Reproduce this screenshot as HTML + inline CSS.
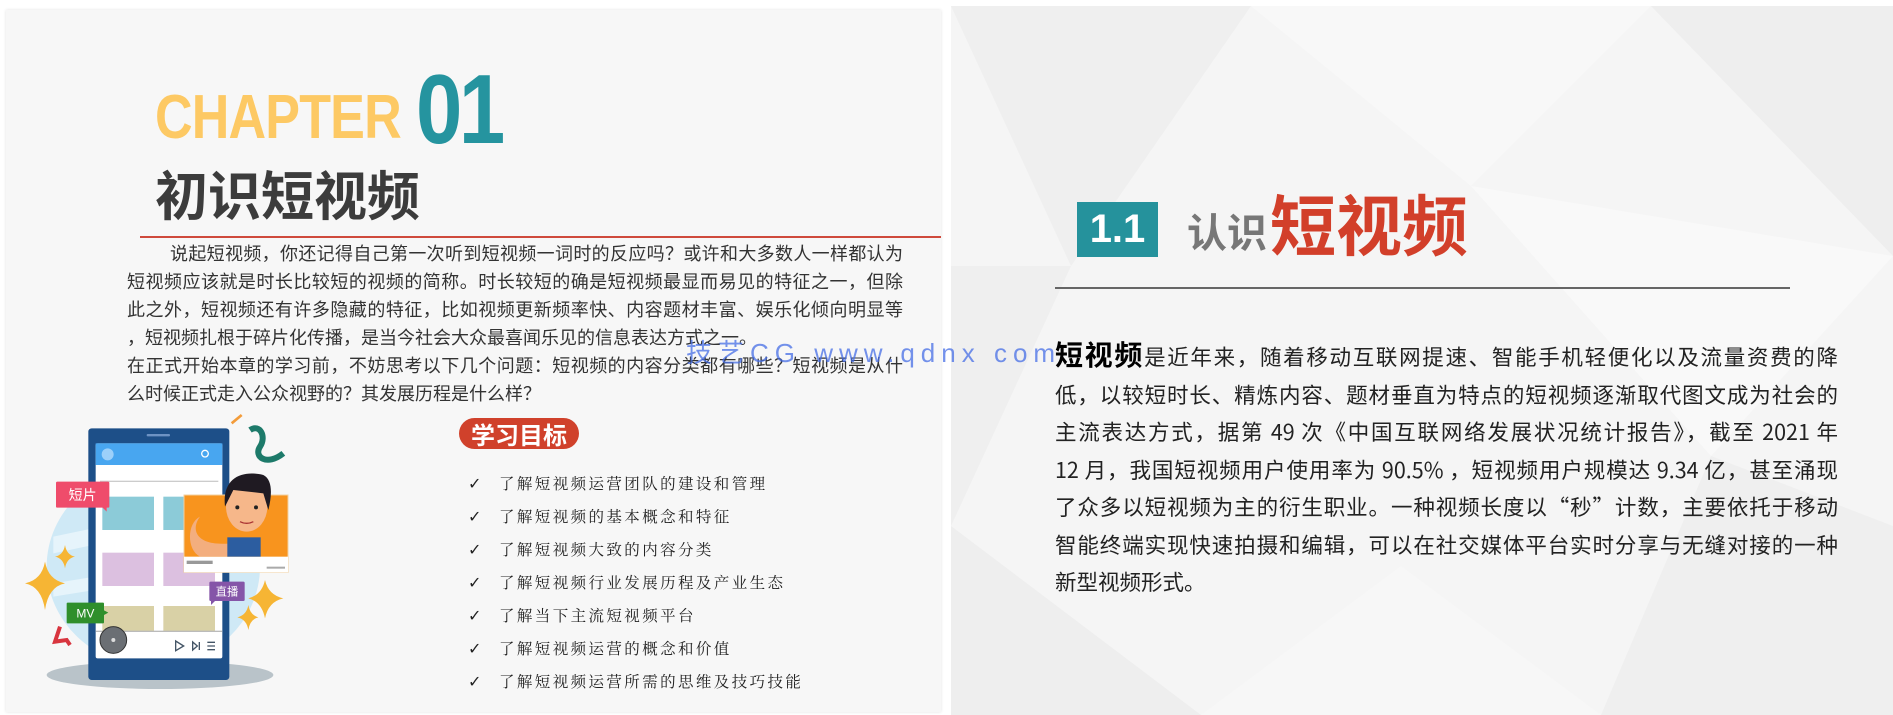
<!DOCTYPE html>
<html><head><meta charset="utf-8">
<style>
*{margin:0;padding:0;box-sizing:border-box}
body{width:1893px;height:715px;background:#fff;position:relative;overflow:hidden;font-family:"Liberation Sans","Noto Sans CJK SC",sans-serif}
.lp{position:absolute;left:6px;top:10px;width:935px;height:702px;background:#f7f7f7;box-shadow:0 0 3px rgba(0,0,0,.12)}
.rp{position:absolute;left:951px;top:6px;width:942px;height:709px;background:#f5f5f5;overflow:hidden}
.abs{position:absolute;white-space:nowrap}
.chap{left:155px;top:78px;font-size:62px;font-weight:bold;color:#fdc964;line-height:80px;letter-spacing:-1px;transform:scaleX(.84);transform-origin:left}
.n01{left:416px;top:54px;font-size:98px;font-weight:bold;color:#25949f;line-height:110px;letter-spacing:-4px;transform:scaleX(.85);transform-origin:left}
.tt{left:155px;top:158px;font-size:53px;font-weight:bold;color:#3c3c3c;line-height:70px;font-family:"Noto Sans CJK SC",sans-serif}
.rl{position:absolute;left:140px;top:236px;width:801px;height:2px;background:#cf4a3c}
.body{position:absolute;left:127px;top:239px;width:776px;font-size:18px;line-height:28px;color:#333;font-family:"Noto Sans CJK SC",sans-serif}
.body div{text-align:justify;text-align-last:justify;white-space:nowrap}
.body div.nl{text-align-last:left}
.pill{position:absolute;left:459px;top:418px;width:120px;height:31px;border-radius:16px;background:#d0412b;color:#fff;font-weight:bold;font-size:24px;line-height:31px;text-align:center;font-family:"Noto Sans CJK SC",sans-serif}
.obj{position:absolute;left:468px;top:467px;font-size:15.5px;color:#222;font-family:"Noto Serif CJK SC",serif;line-height:33px;letter-spacing:2.4px}
.obj span{display:inline-block;width:31px;font-family:"DejaVu Sans";font-size:16px}
.wm{left:686px;top:333px;font-size:26px;color:rgba(70,110,230,.75);letter-spacing:6px;font-family:"Liberation Sans","Noto Sans CJK SC",sans-serif}
.box{position:absolute;left:1077px;top:202px;width:81px;height:55px;background:#25929c;color:#fff;font-weight:bold;font-size:40px;line-height:55px;text-align:center}
.rz{left:1187px;top:200px;font-size:40px;font-weight:bold;color:#777;font-family:"Noto Sans CJK SC",sans-serif;line-height:60px}
.rt{left:1270px;top:180px;font-size:66px;font-weight:bold;color:#d23f2a;font-family:"Noto Sans CJK SC",sans-serif;line-height:84px}
.gl{position:absolute;left:1055px;top:287px;width:735px;height:2px;background:#666}
.rb{position:absolute;left:1055px;top:336px;width:783px;font-size:21.5px;line-height:37.5px;color:#222;font-family:"Noto Sans CJK SC",sans-serif}
.rb div{text-align:justify;text-align-last:justify;white-space:nowrap}
.rb div.nl{text-align-last:left}
.rb b{font-size:28px;color:#000}
</style></head><body>
<div class="lp"></div>
<div class="rp">
<svg width="942" height="709" style="position:absolute;left:0;top:0">
<polygon points="0,0 300,0 120,260" fill="#efefef"/>
<polygon points="300,0 700,0 520,180" fill="#f8f8f8"/>
<polygon points="700,0 942,0 942,250" fill="#eeeeee"/>
<polygon points="0,260 120,260 0,520" fill="#efefef"/>
<polygon points="520,180 942,250 760,450" fill="#f9f9f9"/>
<polygon points="0,520 250,709 0,709" fill="#eeeeee"/>
<polygon points="760,450 942,520 942,709 650,709" fill="#efefef"/>
<polygon points="250,709 450,560 650,709" fill="#f7f7f7"/>
</svg>
</div>
<div class="abs chap">CHAPTER</div>
<div class="abs n01">01</div>
<div class="abs tt">初识短视频</div>
<div class="rl"></div>
<div class="body">
<div style="padding-left:43px">说起短视频，你还记得自己第一次听到短视频一词时的反应吗？或许和大多数人一样都认为</div>
<div>短视频应该就是时长比较短的视频的简称。时长较短的确是短视频最显而易见的特征之一，但除</div>
<div>此之外，短视频还有许多隐藏的特征，比如视频更新频率快、内容题材丰富、娱乐化倾向明显等</div>
<div class="nl">，短视频扎根于碎片化传播，是当今社会大众最喜闻乐见的信息表达方式之一。</div>
<div>在正式开始本章的学习前，不妨思考以下几个问题：短视频的内容分类都有哪些？短视频是从什</div>
<div class="nl">么时候正式走入公众视野的？其发展历程是什么样？</div>
</div>
<div class="pill">学习目标</div>
<div class="obj">
<div><span>✓</span>了解短视频运营团队的建设和管理</div>
<div><span>✓</span>了解短视频的基本概念和特征</div>
<div><span>✓</span>了解短视频大致的内容分类</div>
<div><span>✓</span>了解短视频行业发展历程及产业生态</div>
<div><span>✓</span>了解当下主流短视频平台</div>
<div><span>✓</span>了解短视频运营的概念和价值</div>
<div><span>✓</span>了解短视频运营所需的思维及技巧技能</div>
</div>
<svg style="position:absolute;left:0;top:410px" width="320" height="300" viewBox="0 0 960 900">
<ellipse cx="480" cy="795" rx="340" ry="42" fill="#b9c3c9"/>
<ellipse cx="460" cy="470" rx="320" ry="300" fill="#cfe9f6"/>
<path d="M160 380 L780 250 L780 300 L160 430Z" fill="#e6f4fb"/>
<path d="M160 520 L780 420 L780 460 L160 560Z" fill="#e6f4fb"/>
<rect x="265" y="55" width="423" height="755" rx="10" fill="#1d4f88"/>
<rect x="440" y="72" width="70" height="7" rx="3" fill="#6d93c4"/>
<rect x="287" y="100" width="380" height="645" rx="6" fill="#fff"/>
<rect x="287" y="100" width="380" height="65" fill="#48a6f0"/>
<circle cx="323" cy="133" r="18" fill="#9cd0fa"/>
<circle cx="615" cy="131" r="10" stroke="#fff" stroke-width="4" fill="none"/>
<rect x="300" y="212" width="355" height="4" fill="#ccc"/>
<rect x="307" y="260" width="155" height="100" fill="#8ccbd8"/>
<rect x="490" y="260" width="155" height="100" fill="#8ccbd8"/>
<rect x="307" y="428" width="155" height="100" fill="#dcc0e0"/>
<rect x="490" y="428" width="155" height="100" fill="#dcc0e0"/>
<rect x="307" y="588" width="155" height="75" fill="#d9d1a6"/>
<rect x="490" y="588" width="155" height="75" fill="#d9d1a6"/>
<rect x="287" y="662" width="380" height="4" fill="#bbb"/>
<circle cx="340" cy="690" r="40" fill="#6b6f74" stroke="#333" stroke-width="3"/>
<circle cx="340" cy="690" r="6" fill="#ddd"/>
<path d="M527 693 L527 722 L551 708Z" fill="none" stroke="#456" stroke-width="4"/>
<path d="M578 696 L578 720 L592 708Z M598 696 V720" fill="none" stroke="#456" stroke-width="4"/>
<path d="M622 697 H645 M622 708 H645 M622 719 H645" stroke="#456" stroke-width="4"/>
<rect x="552" y="255" width="312" height="232" fill="#f8941e" stroke="#f2d0a0" stroke-width="3"/>
<rect x="552" y="440" width="312" height="47" fill="#fff"/>
<rect x="560" y="452" width="78" height="10" fill="#999"/>
<rect x="800" y="470" width="55" height="6" fill="#aaa"/>
<path d="M600 320 C570 360 590 410 690 400 L690 440 L600 440 C560 420 560 340 600 320Z" fill="#f3ae7e"/>
<rect x="682" y="382" width="100" height="58" fill="#2c5da0"/>
<ellipse cx="740" cy="290" rx="62" ry="75" fill="#f6b78a"/>
<path d="M675 290 C665 200 730 180 790 195 C820 210 815 260 805 300 L790 250 L700 240 Z" fill="#1f1a22"/>
<circle cx="712" cy="292" r="6" fill="#222"/><circle cx="768" cy="292" r="6" fill="#222"/>
<path d="M720 335 Q740 345 760 335" stroke="#a33" stroke-width="4" fill="none"/>
<path d="M750 60 C780 40 800 80 780 110 C760 140 800 170 850 130" stroke="#1d7a6a" stroke-width="18" fill="none"/>
<path d="M695 40 L725 15" stroke="#f39c3a" stroke-width="8"/>
<rect x="168" y="215" width="160" height="78" rx="4" fill="#ef4c6b"/>
<path d="M305 290 L320 305 L320 290Z" fill="#ef4c6b"/>
<text x="248" y="270" font-size="42" fill="#fff" text-anchor="middle" font-family="Noto Sans CJK SC">短片</text>
<rect x="628" y="515" width="106" height="58" rx="4" fill="#8555a8"/>
<path d="M633 573 L633 585 L645 573Z" fill="#8555a8"/>
<text x="681" y="556" font-size="34" fill="#fff" text-anchor="middle" font-family="Noto Sans CJK SC">直播</text>
<rect x="200" y="578" width="112" height="62" rx="3" fill="#2f8f2c"/>
<path d="M310 600 L325 608 L310 616Z" fill="#2f8f2c"/>
<text x="256" y="622" font-size="36" fill="#fff" text-anchor="middle" font-family="Liberation Sans">MV</text>
<path d="M135 455 Q145 510 195 520 Q145 530 135 600 Q125 530 75 520 Q125 510 135 455Z" fill="#f6b534"/>
<path d="M195 405 Q200 435 225 440 Q200 445 195 475 Q190 445 165 440 Q190 435 195 405Z" fill="#f6b534"/>
<path d="M795 510 Q805 555 850 565 Q805 575 795 625 Q785 575 745 565 Q785 555 795 510Z" fill="#f6b534"/>
<path d="M745 585 Q750 615 775 622 Q750 628 745 660 Q740 628 712 622 Q740 615 745 585Z" fill="#f6b534"/>
<path d="M180 650 L165 695 L200 690 L210 705" stroke="#d8353f" stroke-width="12" fill="none"/>
</svg>
<div class="abs wm">技艺CG  www.qdnx  com</div>
<div class="box">1.1</div>
<div class="abs rz">认识</div>
<div class="abs rt">短视频</div>
<div class="gl"></div>
<div class="rb">
<div><b>短视频</b>是近年来，随着移动互联网提速、智能手机轻便化以及流量资费的降</div>
<div>低，以较短时长、精炼内容、题材垂直为特点的短视频逐渐取代图文成为社会的</div>
<div>主流表达方式，据第 49 次《中国互联网络发展状况统计报告》，截至 2021 年</div>
<div>12 月，我国短视频用户使用率为 90.5% ，短视频用户规模达 9.34 亿，甚至涌现</div>
<div>了众多以短视频为主的衍生职业。一种视频长度以“秒”计数，主要依托于移动</div>
<div>智能终端实现快速拍摄和编辑，可以在社交媒体平台实时分享与无缝对接的一种</div>
<div class="nl">新型视频形式。</div>
</div>
</body></html>
